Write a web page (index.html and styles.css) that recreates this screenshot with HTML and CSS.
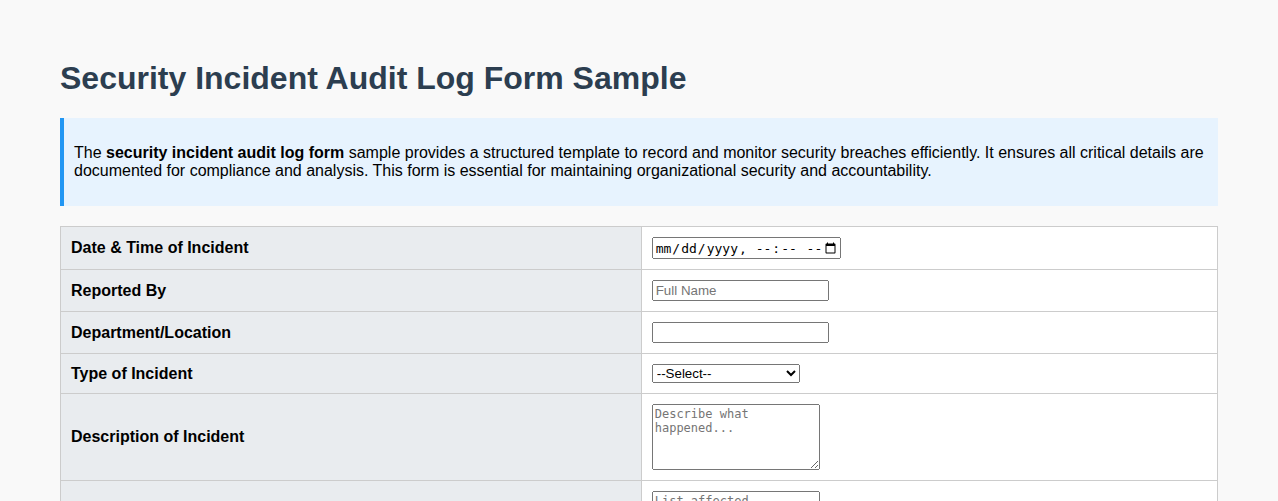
FILE: index.html
```html
<!DOCTYPE html>
<html lang="en">
<head>
<meta charset="utf-8">
<title>Security Incident Audit Log Form Sample</title>
<link rel="stylesheet" href="styles.css">
</head>
<body>
<h1 class="title">Security Incident Audit Log Form Sample</h1>
<div class="intro">
<p>The <strong>security incident audit log form</strong> sample provides a structured template to record and monitor security breaches efficiently. It ensures all critical details are documented for compliance and analysis. This form is essential for maintaining organizational security and accountability.</p>
</div>
<form>
<table class="form-table">
<tr><td class="label">Date &amp; Time of Incident</td><td class="field"><input class="dt" type="datetime-local"></td></tr>
<tr><td class="label">Reported By</td><td class="field"><input class="txt" type="text" placeholder="Full Name"></td></tr>
<tr><td class="label">Department/Location</td><td class="field"><input class="txt" type="text"></td></tr>
<tr><td class="label">Type of Incident</td><td class="field"><select class="sel"><option>--Select--</option><option>Unauthorized Access</option><option>Malware</option><option>Data Breach</option><option>Phishing</option><option>Other</option></select></td></tr>
<tr><td class="label">Description of Incident</td><td class="field"><textarea class="area" placeholder="Describe what happened..."></textarea></td></tr>
<tr><td class="label">Systems/Assets Affected</td><td class="field"><textarea class="area" placeholder="List affected systems..."></textarea></td></tr>
<tr><td class="label">Actions Taken</td><td class="field"><textarea class="area" placeholder="Describe actions taken..."></textarea></td></tr>
</table>
</form>
</body>
</html>
```
FILE: styles.css
```css
body {
  margin: 0;
  padding: 60px 60px 40px;
  background: #f9f9f9;
  font-family: "Liberation Sans", Arial, sans-serif;
  color: #000;
}
.title {
  margin: 0 0 21px;
  font-size: 32px;
  line-height: 37px;
  font-weight: bold;
  color: #2c3e50;
}
.intro {
  background: #e7f3fe;
  border-left: 4px solid #2196f3;
  padding: 10px;
  margin-bottom: 20px;
}
.intro p {
  margin: 16px 0;
  font-size: 16px;
  line-height: 18px;
}
.form-table {
  width: 100%;
  border-collapse: collapse;
  background: #fff;
}
.form-table td {
  border: 1px solid #ccc;
  padding: 10px;
  vertical-align: middle;
}
.form-table .label {
  width: calc(50% + 4px);
  background: #e9ecef;
  font-weight: bold;
  font-size: 16px;
  line-height: 18px;
}
.dt {
  width: 189px;
  height: 22px;
  box-sizing: border-box;
  font-family: "DejaVu Sans Mono", monospace;
  font-size: 13px;
  margin: 0;
}
.txt {
  width: 177px;
  height: 21px;
  box-sizing: border-box;
  margin: 0;
  font-family: "Liberation Sans", Arial, sans-serif;
  font-size: 13.33px;
}
.sel {
  width: 148px;
  height: 19px;
  box-sizing: border-box;
  margin: 0;
  font-family: "Liberation Sans", Arial, sans-serif;
  font-size: 13.33px;
}
.area {
  display: block;
  width: 168px;
  height: 66px;
  box-sizing: border-box;
  margin: 0;
  font-family: "DejaVu Sans Mono", monospace;
  font-size: 12px;
}
```
